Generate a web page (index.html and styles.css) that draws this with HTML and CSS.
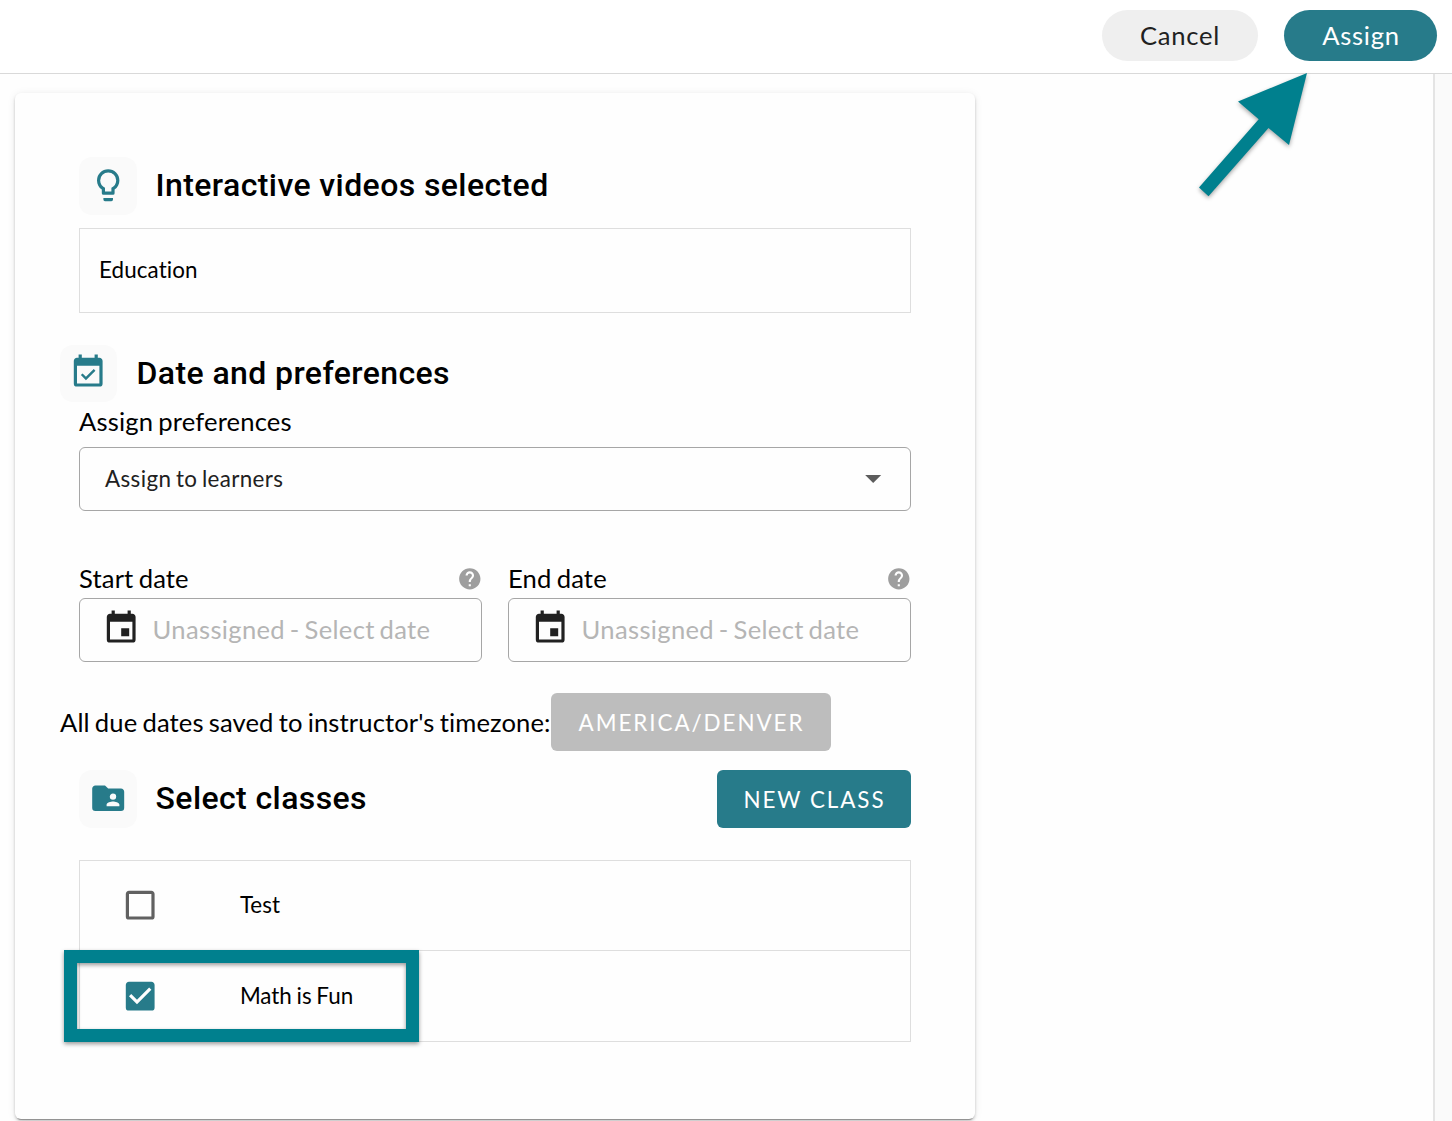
FILE: index.html
```html
<!DOCTYPE html>
<html lang="en">
<head>
<meta charset="utf-8">
<title>Assign</title>
<link rel="stylesheet" href="styles.css">
</head>
<body>
<header class="topbar">
  <button class="pill pill-cancel">Cancel</button>
  <button class="pill pill-assign">Assign</button>
</header>
<div class="page">
  <main class="card">
    <div class="section-head">
      <span class="badge"><svg class="icon" viewBox="0 0 24 24"><path d="M12,2A7,7 0 0,1 19,9C19,11.38 17.81,13.47 16,14.74V17A1,1 0 0,1 15,18H9A1,1 0 0,1 8,17V14.74C6.19,13.47 5,11.38 5,9A7,7 0 0,1 12,2M9,21V20H15V21A1,1 0 0,1 14,22H10A1,1 0 0,1 9,21M12,4A5,5 0 0,0 7,9C7,11.05 8.23,12.81 10,13.58V16H14V13.58C15.77,12.81 17,11.05 17,9A5,5 0 0,0 12,4Z"/></svg></span>
      <h2>Interactive videos selected</h2>
    </div>
    <div class="video-item">Education</div>

    <div class="section-head outdent">
      <span class="badge badge-date"><svg class="icon" viewBox="0 0 24 24"><path d="M19,19H5V8H19M19,3H18V1H16V3H8V1H6V3H5C3.89,3 3,3.89 3,5V19A2,2 0 0,0 5,21H19A2,2 0 0,0 21,19V5C21,3.89 20.1,3 19,3M16.53,11.06L15.47,10L10.59,14.88L8.47,12.76L7.41,13.82L10.59,17L16.53,11.06Z"/></svg></span>
      <h2>Date and preferences</h2>
    </div>
    <div class="label label-pref">Assign preferences</div>
    <div class="field select">
      <span>Assign to learners</span>
      <svg class="icon caret" viewBox="0 0 24 24"><path d="M7,10L12,15L17,10H7Z"/></svg>
    </div>

    <div class="dates">
      <div class="date">
        <div class="label">Start date <svg class="help" viewBox="0 0 24 24"><path d="M15.07,11.25L14.17,12.17C13.45,12.89 13,13.5 13,15H11V14.5C11,13.39 11.45,12.39 12.17,11.67L13.41,10.41C13.78,10.05 14,9.55 14,9C14,7.89 13.1,7 12,7A2,2 0 0,0 10,9H8A4,4 0 0,1 12,5A4,4 0 0,1 16,9C16,9.88 15.64,10.67 15.07,11.25M13,19H11V17H13M12,2A10,10 0 0,0 2,12A10,10 0 0,0 12,22A10,10 0 0,0 22,12C22,6.47 17.5,2 12,2Z"/></svg></div>
        <div class="field date-field">
          <svg class="icon" viewBox="0 0 24 24"><path d="M19,19H5V8H19M16,1V3H8V1H6V3H5C3.89,3 3,3.89 3,5V19A2,2 0 0,0 5,21H19A2,2 0 0,0 21,19V5C21,3.89 20.1,3 19,3H18V1M17,12H12V17H17V12Z"/></svg>
          <span>Unassigned - Select date</span>
        </div>
      </div>
      <div class="date">
        <div class="label">End date <svg class="help" viewBox="0 0 24 24"><path d="M15.07,11.25L14.17,12.17C13.45,12.89 13,13.5 13,15H11V14.5C11,13.39 11.45,12.39 12.17,11.67L13.41,10.41C13.78,10.05 14,9.55 14,9C14,7.89 13.1,7 12,7A2,2 0 0,0 10,9H8A4,4 0 0,1 12,5A4,4 0 0,1 16,9C16,9.88 15.64,10.67 15.07,11.25M13,19H11V17H13M12,2A10,10 0 0,0 2,12A10,10 0 0,0 12,22A10,10 0 0,0 22,12C22,6.47 17.5,2 12,2Z"/></svg></div>
        <div class="field date-field">
          <svg class="icon" viewBox="0 0 24 24"><path d="M19,19H5V8H19M16,1V3H8V1H6V3H5C3.89,3 3,3.89 3,5V19A2,2 0 0,0 5,21H19A2,2 0 0,0 21,19V5C21,3.89 20.1,3 19,3H18V1M17,12H12V17H17V12Z"/></svg>
          <span>Unassigned - Select date</span>
        </div>
      </div>
    </div>

    <div class="timezone outdent">
      <span class="tz-text">All due dates saved to instructor's timezone:</span>
      <button class="btn btn-tz">AMERICA/DENVER</button>
    </div>

    <div class="section-head classes-head">
      <span class="badge"><svg class="icon" viewBox="0 0 24 24"><path d="M19,17H11V16C11,14.67 13.67,14 15,14C16.33,14 19,14.67 19,16M15,9A2,2 0 0,1 17,11A2,2 0 0,1 15,13A2,2 0 0,1 13,11C13,9.89 13.9,9 15,9M20,6H12L10,4H4C2.89,4 2,4.89 2,6V18A2,2 0 0,0 4,20H20A2,2 0 0,0 22,18V8C22,6.89 21.1,6 20,6Z"/></svg></span>
      <h2>Select classes</h2>
      <button class="btn btn-new">NEW CLASS</button>
    </div>
    <div class="classes">
      <div class="class-row">
        <svg class="icon unchecked" viewBox="0 0 24 24"><path d="M19,3H5C3.89,3 3,3.89 3,5V19A2,2 0 0,0 5,21H19A2,2 0 0,0 21,19V5C21,3.89 20.1,3 19,3M19,5V19H5V5H19Z"/></svg>
        <span>Test</span>
      </div>
      <div class="class-row">
        <svg class="icon checked" viewBox="0 0 24 24"><path d="M10,17L5,12L6.41,10.58L10,14.17L17.59,6.58L19,8M19,3H5C3.89,3 3,3.89 3,5V19A2,2 0 0,0 5,21H19A2,2 0 0,0 21,19V5C21,3.89 20.1,3 19,3Z"/></svg>
        <span>Math is Fun</span>
        <div class="highlight"></div>
      </div>
    </div>
  </main>
  <aside class="rail"></aside>
</div>
<svg class="arrow" viewBox="0 0 120 136"><path d="M117,3L48,31.5L68.7,49.2L9,117.5L18.5,126.3L78.5,58L99,75Z"/></svg>
</body>
</html>
```
FILE: styles.css
```css
* { box-sizing: border-box; }
body {
  margin: 0;
  position: relative;
  height: 1121px;
  overflow: hidden;
  display: flex;
  flex-direction: column;
  background: #fefefe;
  color: #000;
  font-family: Lato, sans-serif;
  font-size: 25.6px;
  font-variant-ligatures: none;
  word-spacing: -1.5px;
}
button { border: 0; padding: 0; font-family: inherit; font-variant-ligatures: none; }
.icon { width: 38.4px; height: 38.4px; flex: none; fill: currentColor; }

.topbar {
  display: flex;
  justify-content: flex-end;
  gap: 26px;
  height: 74px;
  flex: none;
  padding: 10px 15px 0 0;
  border-bottom: 1px solid #d9d9d9;
  background: #fff;
}
.pill { height: 51px; padding: 0 0 2px; border-radius: 26px; font-size: 25.6px; letter-spacing: 0.7px; }
.pill-cancel { width: 156px; background: #efefef; color: #212121; }
.pill-assign { width: 153px; padding-left: 1px; background: #277b8a; color: #fff; }

.page { display: flex; flex: 1; justify-content: space-between; padding-left: 15px; }
.rail { width: 19px; border-left: 2px solid #e4e4e4; background: #fafafa; }
.card {
  width: 960px;
  height: 1026px;
  margin-top: 19px;
  padding: 64px;
  border-radius: 6px;
  background: #fefefe;
  box-shadow: 0 3px 1px -2px rgba(0,0,0,.3), 0 2px 3px rgba(0,0,0,.2), 0 1px 8px rgba(0,0,0,.08);
}

.section-head { display: flex; align-items: center; height: 58px; }
.badge {
  display: flex;
  align-items: center;
  justify-content: center;
  width: 58px;
  height: 58px;
  margin-right: 18.6px;
  padding: 0 0.4px 1px 0;
  border-radius: 13px;
  background: #fafafa;
  color: #277b8a;
}
.badge-date { width: 57px; height: 57px; margin: 0 19.5px 1px 0; padding: 0 0 2px; }
h2 { margin: 0 0 2px; font: 500 32px/1.2 Roboto, sans-serif; letter-spacing: 0.4px; word-spacing: 0; }
.outdent { margin-left: -19px; }

.video-item {
  height: 85px;
  margin: 13px 0 32px;
  padding-left: 19px;
  border: 1px solid #dedede;
  font-size: 22.4px;
  line-height: 81px;
  letter-spacing: 0.1px;
}
.label { display: flex; align-items: center; justify-content: space-between; height: 39px; padding-bottom: 1px; letter-spacing: 0.15px; }
.label-pref { height: 36px; margin-bottom: 8px; }
.field { display: flex; align-items: center; height: 64px; border: 1px solid #a6a6a6; border-radius: 6px; }
.select { justify-content: space-between; padding: 0 18px 0 25px; font-size: 22.4px; letter-spacing: 0.37px; color: #212121; }
.select span { padding-bottom: 2px; }
.caret { margin-bottom: 1px; color: #5c5c5c; }

.dates { display: flex; gap: 26px; margin-top: 48px; }
.date { flex: 1; }
.help { width: 25.6px; height: 25.6px; margin: 1px -0.3px 0 0; fill: #9e9e9e; }
.date-field { padding-left: 21.6px; color: #212121; }
.date-field .icon { margin: 0 12.6px 3px 0; }
.date-field span { padding-bottom: 2px; color: #b5b5b5; letter-spacing: 0.32px; word-spacing: -2px; }

.timezone { display: flex; align-items: center; margin-top: 31px; }
.tz-text { width: 491px; white-space: nowrap; letter-spacing: 0.11px; }
.btn { height: 58px; padding-left: 1px; border-radius: 6px; color: #fff; font-size: 22.4px; letter-spacing: 1.95px; }
.btn-tz { width: 280px; background: #bdbdbd; }
.btn-new { width: 194px; margin-left: auto; background: #277b8a; }
.classes-head { margin: 19px 0 32px; }

.classes { border: 1px solid #dedede; }
.class-row { position: relative; display: flex; align-items: center; height: 89px; padding-left: 41.4px; font-size: 22.4px; word-spacing: -1px; }
.class-row + .class-row { height: 91px; border-top: 1px solid #dedede; }
.class-row .icon { margin: 0 80.1px 1.6px 0; }
.class-row + .class-row .icon { margin-bottom: 0.6px; }
.class-row span { padding-bottom: 2px; }
.class-row + .class-row span { padding-bottom: 1px; }
.unchecked { color: #616161; }
.checked { color: #277b8a; }

/* Callouts drawn over the page */
.highlight {
  position: absolute;
  left: -16px;
  top: -1.5px;
  width: 354.5px;
  height: 92.5px;
  border: 13px solid #00808e;
  filter: drop-shadow(0 2px 2px rgba(0,0,0,.4));
}
.arrow {
  position: absolute;
  left: 1190px;
  top: 70px;
  width: 120px;
  height: 136px;
  overflow: visible;
  fill: #00808e;
  filter: drop-shadow(0 2px 2px rgba(0,0,0,.35));
}
```
